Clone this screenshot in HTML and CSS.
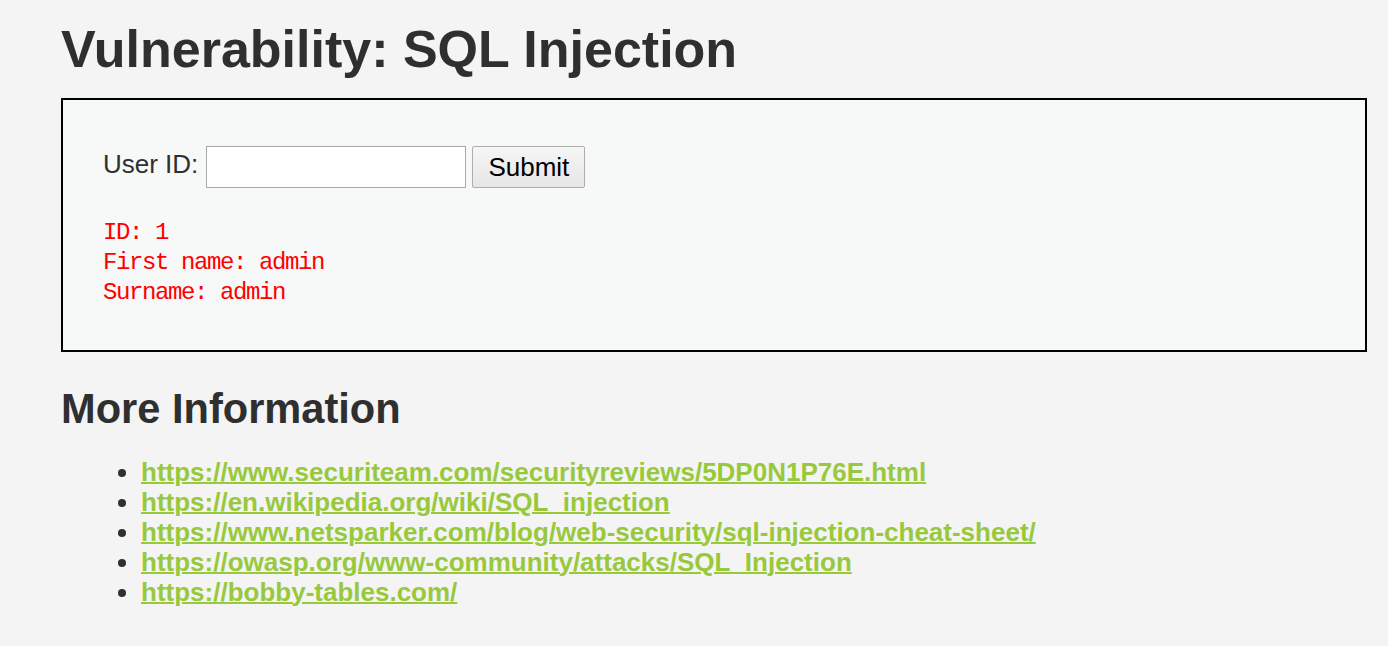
FILE: index.html
```html
<!DOCTYPE html>
<html lang="en">
<head>
<meta charset="utf-8">
<title>Vulnerability: SQL Injection</title>
<link rel="stylesheet" href="styles.css">
</head>
<body>
<div class="page">
  <h1 class="title">Vulnerability: SQL Injection</h1>
  <div class="code-area">
    <form class="form-row" onsubmit="return false">
      <label class="label" for="uid">User ID:</label>
      <input class="field" id="uid" type="text" name="id">
      <button class="submit" type="button">Submit</button>
    </form>
    <pre class="result">ID: 1
First name: admin
Surname: admin</pre>
  </div>
  <h2 class="subtitle">More Information</h2>
  <ul class="links">
    <li><a href="#">https://www.securiteam.com/securityreviews/5DP0N1P76E.html</a></li>
    <li><a href="#">https://en.wikipedia.org/wiki/SQL_injection</a></li>
    <li><a href="#">https://www.netsparker.com/blog/web-security/sql-injection-cheat-sheet/</a></li>
    <li><a href="#">https://owasp.org/www-community/attacks/SQL_Injection</a></li>
    <li><a href="#">https://bobby-tables.com/</a></li>
  </ul>
</div>
</body>
</html>
```
FILE: styles.css
```css
html, body {
  margin: 0;
  background: #f4f4f4;
}

body {
  font-family: "Liberation Sans", Arial, sans-serif;
  font-size: 26px;
  color: #2f2f2f;
}

.page {
  padding: 19px 21px 0 61px;
}

.title {
  margin: 0;
  font-size: 52px;
  line-height: 60px;
  font-weight: bold;
}

.code-area {
  margin-top: 19px;
  height: 254px;
  box-sizing: border-box;
  border: 2px solid #000;
  background: #f7f8f8;
  padding: 46px 40px 0 40px;
}

.form-row {
  display: flex;
  align-items: flex-start;
  margin: 0;
}

.label {
  padding-top: 3px;
  line-height: 30px;
}

.field {
  margin-left: 8px;
  width: 260px;
  height: 42px;
  box-sizing: border-box;
  border: 1px solid #a9a9a9;
  background: #fff;
  padding: 0 4px;
  font: 26px "Liberation Sans", Arial, sans-serif;
}

.submit {
  margin-left: 6px;
  width: 113px;
  height: 42px;
  box-sizing: border-box;
  border: 1px solid #adadad;
  border-radius: 2px;
  background: linear-gradient(#f6f6f6, #e6e6e6);
  padding: 0;
  font: 26px "Liberation Sans", Arial, sans-serif;
  color: #000;
}

.result {
  margin: 30px 0 0;
  color: #ff0000;
  font-family: "Liberation Mono", "DejaVu Sans Mono", monospace;
  font-size: 24px;
  letter-spacing: -1.4px;
  line-height: 30px;
}

.subtitle {
  margin: 33px 0 0;
  font-size: 41.6px;
  line-height: 48px;
  font-weight: bold;
}

.links {
  margin: 24px 0 0;
  padding-left: 80px;
  line-height: 30px;
}

.links a {
  color: #98c93c;
  font-weight: bold;
  text-decoration: underline;
  text-decoration-thickness: 2px;
}
```
